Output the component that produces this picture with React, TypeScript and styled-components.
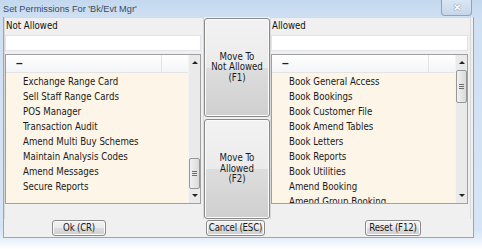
import React from "react";
import styled, { createGlobalStyle } from "styled-components";

const Global = createGlobalStyle`
  html, body { margin: 0; padding: 0; background: #ffffff; }
  * { box-sizing: border-box; }
`;

const FONT = `"DejaVu Sans Condensed", "DejaVu Sans", "Liberation Sans", sans-serif`;

const Window = styled.div`
  width: 482px;
  height: 249px;
  overflow: hidden;
  position: relative;
  font-family: ${FONT};
  background: linear-gradient(to bottom, #c3d7ee 0px, #cfe0f3 17px, #d6e5f5 230px, #e8f0fa 240px, #ffffff 249px);
  padding-left: 3px;
`;

const TitleBar = styled.div`
  height: 17px;
  width: 472px;
  display: flex;
  align-items: center;
  justify-content: space-between;
  padding-right: 3px;
`;

const Title = styled.div`
  font-family: "Liberation Sans", Arial, sans-serif;
  font-size: 9.2px;
  color: #3c4b5e;
  padding-top: 1px;
  white-space: nowrap;
`;

const CloseBtn = styled.div`
  width: 31px;
  height: 16px;
  margin-top: -2px;
  border: 1px solid #8ea3bd;
  border-top: none;
  border-radius: 0 0 4px 4px;
  background: linear-gradient(to bottom, #dbe6f3, #c6d6ea);
  display: flex;
  align-items: center;
  justify-content: center;
  color: #ffffff;
  font-family: "Liberation Sans", Arial, sans-serif;
  font-size: 10px;
  font-weight: bold;
  text-shadow: 0 0 1px #6d84a3, 0 0 1px #6d84a3;
`;

const Body = styled.div`
  width: 471px;
  height: 221px;
  background: #f0f0f0;
  border: 1px solid #93a7c1;
  border-top: none;
  display: flex;
  flex-direction: column;
`;

const Main = styled.div`
  display: grid;
  grid-template-columns: 200px 66px 201px;
  height: 202px;
`;

const Panel = styled.div`
  display: flex;
  flex-direction: column;
  border: 1px solid #d9d9d9;
  border-bottom: none;
`;

const PanelLabel = styled.div`
  font-size: 9.6px;
  color: #111;
  height: 16px;
  line-height: 16px;
  padding-left: 1px;
  white-space: nowrap;
`;

const SearchInput = styled.div`
  height: 16px;
  margin: 1px 2px 0 0;
  background: #ffffff;
  border: 1px solid #e2e3ea;
`;

const ListBox = styled.div`
  margin: 3px 2px 0 0;
  height: 150px;
  border: 1px solid #a0a0a0;
  background: #fdf5e8;
  display: flex;
  overflow: hidden;
`;

const ListMain = styled.div`
  flex: 1;
  display: flex;
  flex-direction: column;
  overflow: hidden;
`;

const ListHeader = styled.div`
  height: 18px;
  flex-shrink: 0;
  display: grid;
  grid-template-columns: 1fr 27px;
  background: linear-gradient(to bottom, #ffffff, #f4f5f7);
  border-bottom: 1px solid #e3e4e6;
`;

const HeaderCell = styled.div<{ $divider?: boolean }>`
  font-family: "Liberation Sans", Arial, sans-serif;
  font-size: 12px;
  font-weight: bold;
  color: #222;
  padding-left: 10px;
  line-height: 17px;
  border-left: ${(p) => (p.$divider ? "1px solid #e2e3e5" : "none")};
`;

const Rows = styled.div`
  padding-top: 1px;
`;

const Row = styled.div`
  height: 15px;
  line-height: 15px;
  font-size: 9.6px;
  color: #1a1a1a;
  padding-left: 17px;
  white-space: nowrap;
`;

const ScrollBar = styled.div`
  width: 12px;
  flex-shrink: 0;
  background: #eaeaea;
  border-left: 1px solid #f4f4f4;
  display: flex;
  flex-direction: column;
  align-items: center;
`;

const Arrow = styled.div<{ $down?: boolean }>`
  width: 12px;
  height: 15px;
  display: flex;
  align-items: center;
  justify-content: center;
  &::after {
    content: "";
    width: 0;
    height: 0;
    border-left: 3px solid transparent;
    border-right: 3px solid transparent;
    ${(p) =>
      p.$down
        ? "border-top: 3px solid #222;"
        : "border-bottom: 3px solid #222;"}
  }
`;

const Track = styled.div`
  flex: 1;
  width: 12px;
  display: flex;
  flex-direction: column;
  align-items: center;
`;

const Thumb = styled.div`
  width: 11px;
  border: 1px solid #979797;
  border-radius: 2px;
  background: linear-gradient(to right, #f1f1f1, #dadada);
  display: flex;
  flex-direction: column;
  align-items: center;
  justify-content: center;
  gap: 1px;
  & > i {
    display: block;
    width: 5px;
    height: 1px;
    background: #6e6e6e;
  }
`;

const Middle = styled.div`
  display: flex;
  flex-direction: column;
  gap: 2px;
  padding-top: 1px;
`;

const BigButton = styled.div<{ $h: number }>`
  height: ${(p) => p.$h}px;
  border: 1px solid #8a8a8a;
  border-radius: 3px;
  background: linear-gradient(to bottom, #f2f2f2 0%, #ebebeb 50%, #dddddd 50%, #cfcfcf 100%);
  box-shadow: inset 0 0 0 1px #fbfbfb;
  display: flex;
  align-items: center;
  justify-content: center;
  text-align: center;
  font-size: 9.6px;
  line-height: 10.5px;
  color: #1a1a1a;
  white-space: nowrap;
`;

const Footer = styled.div`
  display: grid;
  grid-template-columns: 200px 66px 201px;
  height: 19px;
  align-items: center;
`;

const Cell = styled.div<{ $pad: number }>`
  display: flex;
  padding-left: ${(p) => p.$pad}px;
`;

const SmallButton = styled.div<{ $w: number }>`
  width: ${(p) => p.$w}px;
  height: 16px;
  border: 1px solid #8a8a8a;
  border-radius: 3px;
  background: linear-gradient(to bottom, #f2f2f2 0%, #ebebeb 50%, #dddddd 50%, #cfcfcf 100%);
  box-shadow: inset 0 0 0 1px #fbfbfb;
  font-size: 9.6px;
  line-height: 14px;
  text-align: center;
  color: #1a1a1a;
  white-space: nowrap;
  letter-spacing: -0.2px;
`;

type ListProps = { items: string[]; thumbTop: number; thumbH: number };

const List: React.FC<ListProps> = ({ items, thumbTop, thumbH }) => (
  <ListBox>
    <ListMain>
      <ListHeader>
        <HeaderCell>–</HeaderCell>
        <HeaderCell $divider />
      </ListHeader>
      <Rows>
        {items.map((t) => (
          <Row key={t}>{t}</Row>
        ))}
      </Rows>
    </ListMain>
    <ScrollBar>
      <Arrow />
      <Track>
        <Thumb style={{ marginTop: thumbTop, height: thumbH }}>
          <i />
          <i />
          <i />
        </Thumb>
      </Track>
      <Arrow $down />
    </ScrollBar>
  </ListBox>
);

const notAllowed = [
  "Exchange Range Card",
  "Sell Staff Range Cards",
  "POS Manager",
  "Transaction Audit",
  "Amend Multi Buy Schemes",
  "Maintain Analysis Codes",
  "Amend Messages",
  "Secure Reports",
];

const allowed = [
  "Book General Access",
  "Book Bookings",
  "Book Customer File",
  "Book Amend Tables",
  "Book Letters",
  "Book Reports",
  "Book Utilities",
  "Amend Booking",
  "Amend Group Booking",
];

export default function App() {
  return (
    <>
      <Global />
      <Window>
        <TitleBar>
          <Title>Set Permissions For 'Bk/Evt Mgr'</Title>
          <CloseBtn>✕</CloseBtn>
        </TitleBar>
        <Body>
          <Main>
            <Panel>
              <PanelLabel>Not Allowed</PanelLabel>
              <SearchInput />
              <List items={notAllowed} thumbTop={88} thumbH={31} />
            </Panel>
            <Middle>
              <BigButton $h={99}>
                Move To
                <br />
                Not Allowed
                <br />
                (F1)
              </BigButton>
              <BigButton $h={100}>
                Move To
                <br />
                Allowed
                <br />
                (F2)
              </BigButton>
            </Middle>
            <Panel>
              <PanelLabel>Allowed</PanelLabel>
              <SearchInput />
              <List items={allowed} thumbTop={0} thumbH={33} />
            </Panel>
          </Main>
          <Footer>
            <Cell $pad={48}>
              <SmallButton $w={54}>Ok (CR)</SmallButton>
            </Cell>
            <Cell $pad={2}>
              <SmallButton $w={59}>Cancel (ESC)</SmallButton>
            </Cell>
            <Cell $pad={95}>
              <SmallButton $w={56}>Reset (F12)</SmallButton>
            </Cell>
          </Footer>
        </Body>
      </Window>
    </>
  );
}
